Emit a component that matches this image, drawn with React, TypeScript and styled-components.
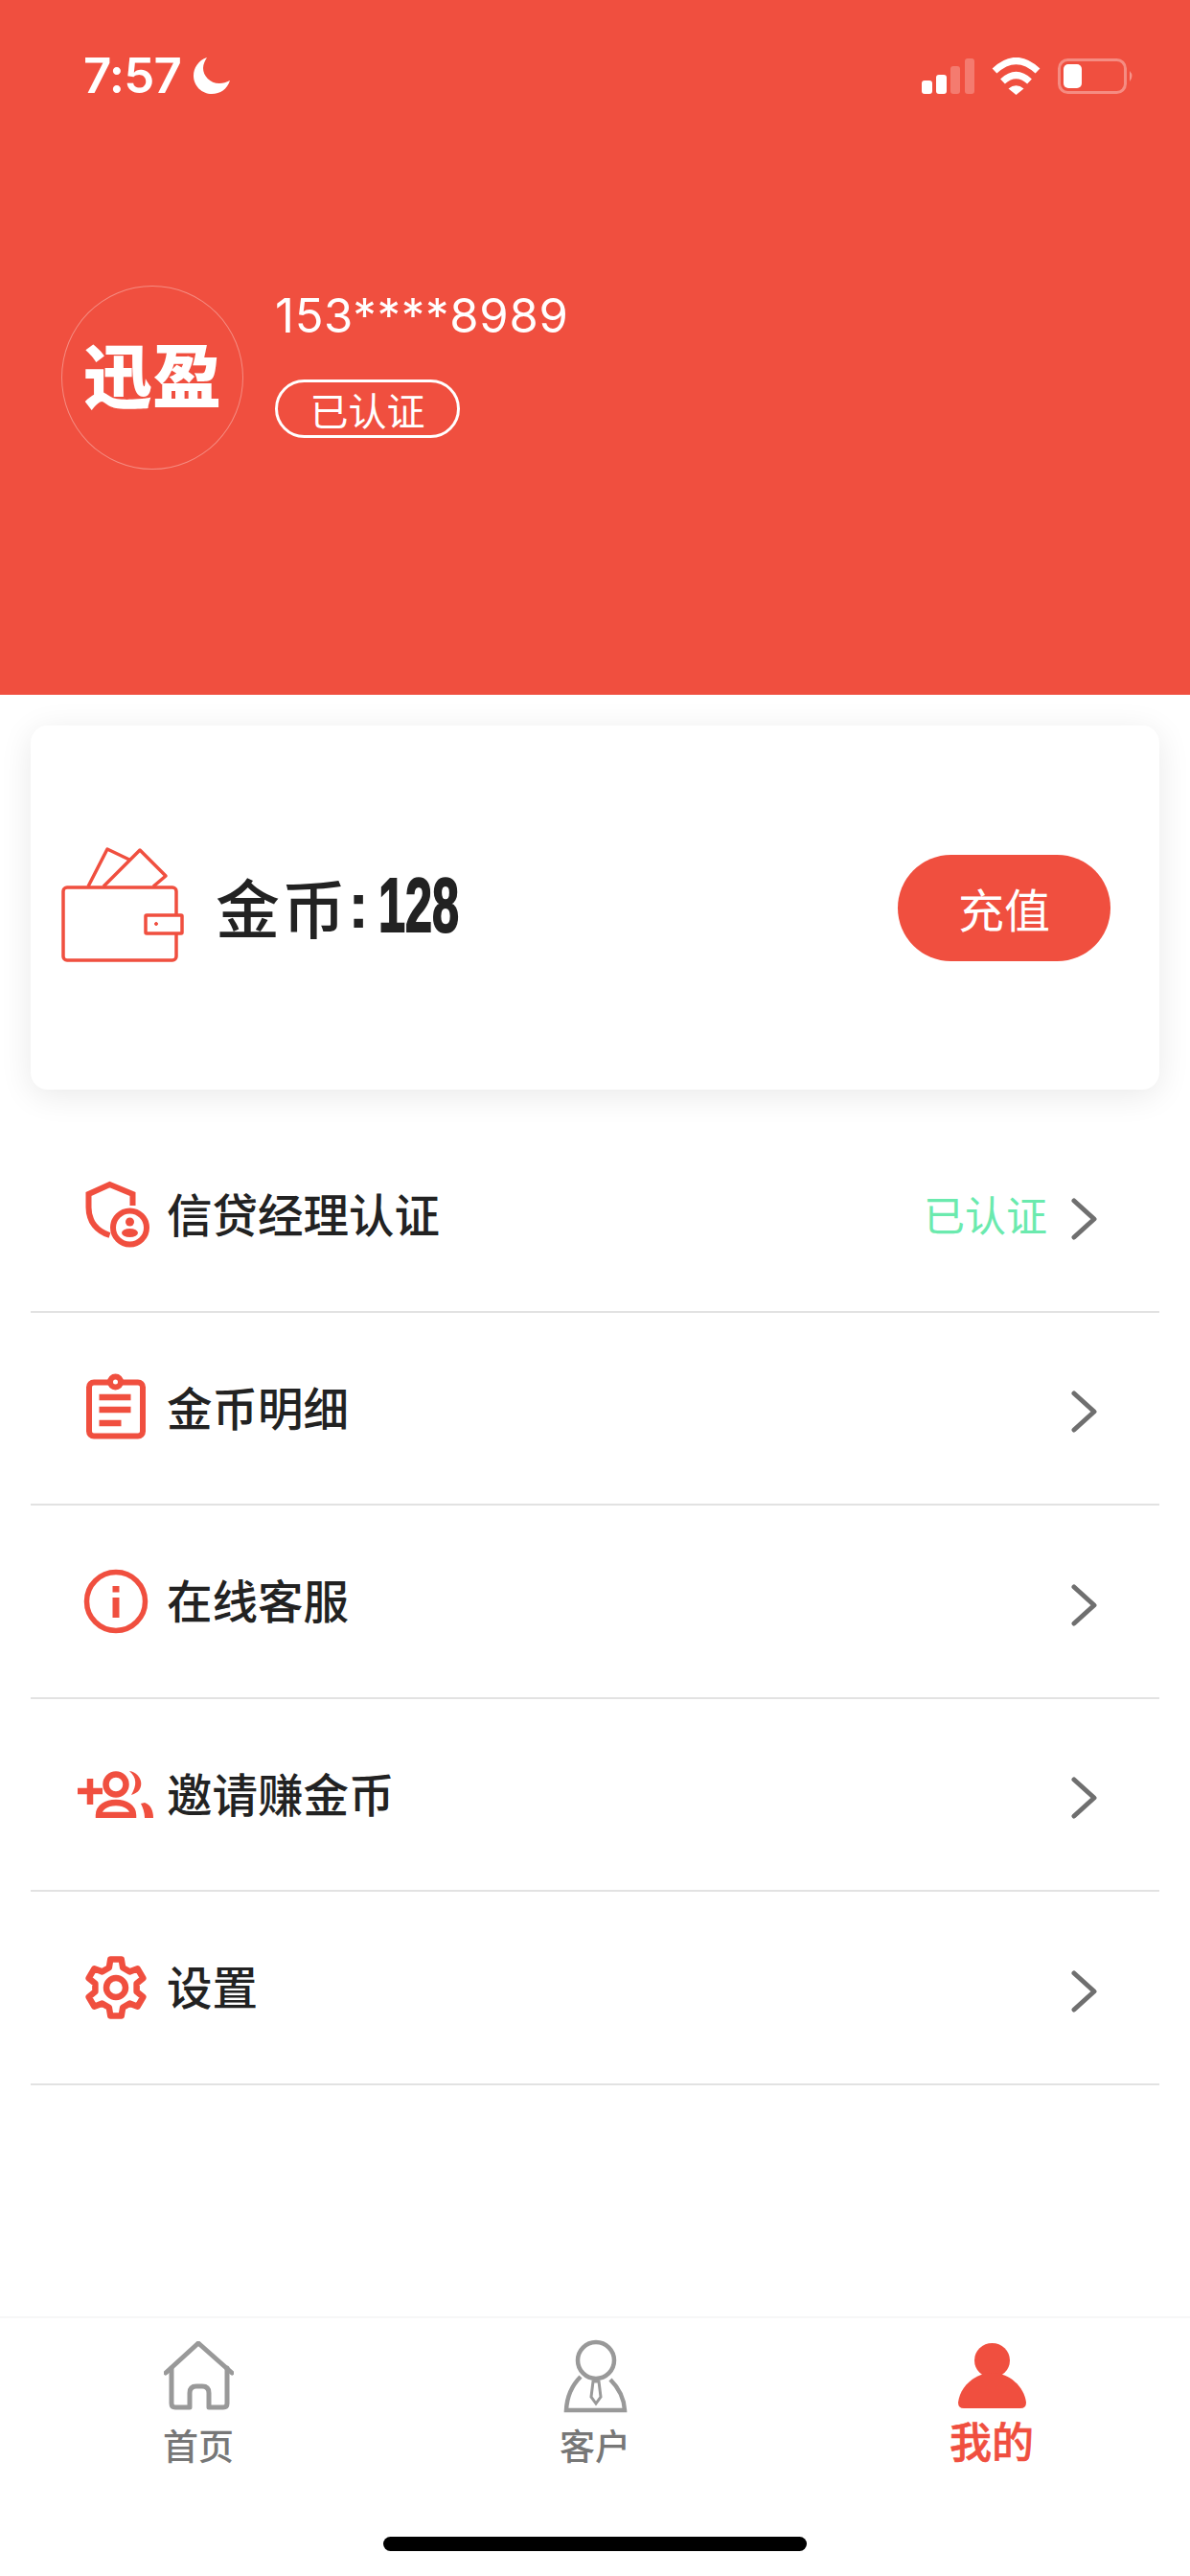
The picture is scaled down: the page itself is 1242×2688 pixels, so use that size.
import React from 'react';
import styled, { createGlobalStyle } from 'styled-components';

const RED = '#f04f3f';
const CJK = '"Noto Sans CJK SC", "Noto Sans", sans-serif';

const GlobalStyle = createGlobalStyle`
  html, body {
    margin: 0;
    padding: 0;
    background: #fff;
    font-family: ${CJK};
  }
`;

const Page = styled.div`
  width: 1242px;
  height: 2688px;
  display: flex;
  flex-direction: column;
  background: #fff;
  overflow: hidden;
`;

const Header = styled.header`
  height: 725px;
  flex-shrink: 0;
  background: ${RED};
  color: #fff;
  display: flex;
  flex-direction: column;
`;

const StatusBar = styled.div`
  display: flex;
  justify-content: space-between;
  align-items: center;
  height: 40px;
  padding: 59px 58px 0 87px;
`;

const StatusLeft = styled.div`
  display: flex;
  align-items: center;
  gap: 13px;
`;

const Time = styled.span`
  font-family: Inter, sans-serif;
  font-size: 51px;
  font-weight: 600;
  line-height: 40px;
  letter-spacing: -0.8px;
`;

const StatusRight = styled.div`
  display: flex;
  align-items: center;
  gap: 18px;
`;

const Profile = styled.div`
  display: flex;
  gap: 33px;
  padding: 199px 0 0 64px;
`;

const Avatar = styled.div`
  width: 190px;
  height: 192px;
  box-sizing: border-box;
  border: 1.5px solid rgba(255, 255, 255, 0.35);
  border-radius: 50%;
  display: flex;
  align-items: center;
  justify-content: center;
  font-size: 72px;
  font-weight: 900;
  line-height: 1;
  padding-bottom: 12px;
`;

const ProfileInfo = styled.div`
  display: flex;
  flex-direction: column;
  align-items: flex-start;
  padding-top: 4px;
`;

const Phone = styled.div`
  font-family: Inter, sans-serif;
  font-size: 49px;
  line-height: 56px;
  letter-spacing: 0.7px;
`;

const Badge = styled.div`
  width: 193px;
  height: 61px;
  box-sizing: border-box;
  margin-top: 38px;
  border: 3px solid #fff;
  border-radius: 31px;
  display: flex;
  align-items: center;
  justify-content: center;
  font-size: 40px;
  line-height: 1;
`;

const CoinCard = styled.section`
  height: 380px;
  flex-shrink: 0;
  margin: 32px 32px 0;
  padding: 0 51px 0 30px;
  background: #fff;
  border-radius: 18px;
  box-shadow: 0 6px 34px rgba(0, 0, 0, 0.09);
  display: flex;
  align-items: center;
  justify-content: space-between;
`;

const CoinInfo = styled.div`
  display: flex;
  align-items: center;
  gap: 31px;
`;

const WalletSvg = styled.svg`
  margin-bottom: 4px;
`;

const CoinText = styled.div`
  display: flex;
  align-items: center;
  font-size: 67px;
  font-weight: 500;
  line-height: 80px;
  color: #222;
  letter-spacing: 2px;
  padding-bottom: 5px;
`;

const Colon = styled.span`
  font-family: "Liberation Sans", sans-serif;
  font-weight: 700;
  margin: 0 8px 0 0;
`;

const CoinCount = styled.span`
  display: inline-block;
  font-family: "Liberation Sans", sans-serif;
  font-size: 80px;
  font-weight: 700;
  letter-spacing: 0;
  width: 84px;
  white-space: nowrap;
  transform: scaleX(0.63);
  transform-origin: left center;
  -webkit-text-stroke: 2px #222;
`;

const RechargeButton = styled.button`
  width: 222px;
  height: 111px;
  border: none;
  border-radius: 56px;
  background: ${RED};
  color: #fff;
  font-family: ${CJK};
  font-size: 48px;
  padding: 0;
`;

const Menu = styled.nav`
  margin: 31px 32px 0;
  display: flex;
  flex-direction: column;
`;

const Row = styled.div`
  height: 201.5px;
  box-sizing: border-box;
  border-bottom: 2px solid #e2e2e2;
  display: flex;
  align-items: center;
  padding: 0 65px 0 49px;
`;

const RowIcon = styled.div`
  width: 80px;
  height: 72px;
  margin-right: 13px;
  display: flex;
  align-items: center;
  justify-content: center;
`;

const RowLabel = styled.span`
  flex: 1;
  font-size: 47.5px;
  font-weight: 500;
  line-height: 60px;
  color: #222;
  padding-bottom: 3px;
`;

const RowStatus = styled.span`
  font-size: 43px;
  color: #6beaae;
  margin-right: 25px;
  padding-bottom: 3px;
`;

const Chevron = styled.svg`
  margin-top: 8px;
`;

const TabBar = styled.footer`
  margin-top: auto;
  height: 271px;
  flex-shrink: 0;
  box-sizing: border-box;
  border-top: 2px solid #f7f7f7;
  display: flex;
  flex-direction: column;
  align-items: center;
`;

const Tabs = styled.div`
  width: 100%;
  height: 228px;
  display: grid;
  grid-template-columns: repeat(3, 1fr);
`;

const Tab = styled.div`
  display: flex;
  flex-direction: column;
  align-items: center;
  padding-top: 22px;
`;

const TabIcon = styled.div`
  height: 76px;
  display: flex;
  align-items: center;
  justify-content: center;
`;

const TabLabel = styled.span<{ $active?: boolean }>`
  margin-top: ${(p) => (p.$active ? '7px' : '14px')};
  font-size: ${(p) => (p.$active ? '44px' : '37px')};
  font-weight: 500;
  line-height: ${(p) => (p.$active ? '44px' : '40px')};
  color: ${(p) => (p.$active ? RED : '#777')};
  -webkit-text-stroke: ${(p) => (p.$active ? '0.6px' : '0')} ${RED};
`;

const HomeIndicator = styled.div`
  width: 442px;
  height: 15px;
  border-radius: 8px;
  background: #000;
`;

const MoonIcon = () => (
  <svg width="38" height="38" viewBox="0 0 38 38">
    <path
      fill="#fff"
      d="M14 0C5 3 0 11 0 19c0 11 9 19 19 19 9 0 16-5 19-14-4 2-7 3-11 3-10 0-17-8-17-16 0-4 2-8 4-11z"
    />
  </svg>
);

const SignalIcon = () => (
  <svg width="55" height="37" viewBox="0 0 55 37" fill="#fff">
    <rect x="0" y="23" width="11" height="14" rx="3" />
    <rect x="15" y="17" width="11" height="20" rx="3" />
    <rect x="30" y="8" width="10" height="29" rx="3" opacity="0.25" />
    <rect x="45" y="0" width="10" height="37" rx="3" opacity="0.25" />
  </svg>
);

const WifiIcon = () => (
  <svg width="51" height="39" viewBox="0 0 51 39" fill="none" stroke="#fff" strokeWidth="7">
    <path d="M3 14Q25.5-7 48 14" />
    <path d="M11.500 25Q25.500 12 39.500 25" />
    <path fill="#fff" stroke="none" d="M17.500 32.500Q25.500 26 33.500 32.500L25.500 39z" />
  </svg>
);

const BatteryIcon = () => (
  <svg width="80" height="37" viewBox="0 0 80 37" fill="none">
    <rect x="1.500" y="1.500" width="69" height="34" rx="9" stroke="#fff" strokeOpacity="0.35" strokeWidth="3" />
    <rect x="6" y="6" width="19" height="25" rx="5" fill="#fff" />
    <path d="M75 13q5 5 0 11z" fill="#fff" fillOpacity="0.4" />
  </svg>
);

const WalletIcon = () => (
  <WalletSvg width="132" height="122" viewBox="0 0 132 122" fill="none" stroke={RED} strokeWidth="3.500" strokeLinejoin="round">
    <rect x="4" y="42" width="118" height="76" rx="4" />
    <rect x="90" y="71" width="38" height="19" rx="1" fill="#fff" />
    <circle cx="101" cy="80" r="1.500" fill={RED} strokeWidth="1" />
    <path d="M30 41 50 2 73 13" />
    <path d="M46 41 84 3l27 27-13 11" />
  </WalletSvg>
);

const ShieldIcon = () => (
  <svg width="72" height="72" viewBox="-1.500 0 72 72" fill="none" stroke={RED} strokeWidth="6">
    <path d="M52 26V14L28 4 6 14v14c0 15 9 25 22 29" />
    <circle cx="49" cy="49" r="17.500" />
    <circle cx="49" cy="43" r="4.500" fill={RED} stroke="none" />
    <ellipse cx="49" cy="54.500" rx="8.500" ry="4.500" fill={RED} stroke="none" />
  </svg>
);

const ClipboardIcon = () => (
  <svg width="72" height="72" viewBox="-2.500 0 72 72" fill="none" stroke={RED} strokeWidth="6">
    <rect x="5.500" y="9.500" width="56" height="56" rx="5" />
    <circle cx="33" cy="9" r="5.500" fill="#fff" />
    <path strokeWidth="6.500" d="M16 25h33M16 38h33M16 52h23" />
  </svg>
);

const InfoIcon = () => (
  <svg width="72" height="72" viewBox="0 0 72 72" fill="none" stroke={RED} strokeWidth="5.500">
    <circle cx="36" cy="36" r="30.500" />
    <path strokeWidth="7" d="M36 20v6.500M36 32v21" />
  </svg>
);

const InviteIcon = () => (
  <svg width="80" height="50" viewBox="0 0 80 50" fill="none" stroke={RED} strokeWidth="6.500">
    <path d="M0 22h26M13 9v27" />
    <circle cx="40" cy="15" r="10.500" />
    <path fill={RED} stroke="none" d="M54 1c14 2 18 21 2 25 6-10 6-18-2-25z" />
    <path d="M22 47c0-8 8-13 18-13s18 5 18 13z" />
    <path fill={RED} stroke="none" d="M70 34c6 2 9 8 9 16H70c0-6-2-11-4-15z" />
  </svg>
);

// gear outline, six teeth with one pointing straight up
const gearPath = () => {
  const pt = (deg: number, r: number) => {
    const a = (deg * Math.PI) / 180;
    return `${(36 + r * Math.cos(a)).toFixed(2)} ${(36 + r * Math.sin(a)).toFixed(2)}`;
  };
  const parts: string[] = [];
  for (let i = 0; i < 6; i++) {
    const c = -90 + i * 60;
    parts.push(pt(c - 19, 22), pt(c - 11, 30), pt(c + 11, 30), pt(c + 19, 22));
  }
  return `M${parts.join('L')}Z`;
};

const GearIcon = () => (
  <svg width="72" height="72" viewBox="0 0 72 72" fill="none" stroke={RED} strokeWidth="6.500" strokeLinejoin="round">
    <path d={gearPath()} />
    <circle cx="36" cy="36" r="10" />
  </svg>
);

const HomeIcon = () => (
  <svg width="73" height="72" viewBox="0 0 73 72" fill="none" stroke="#999" strokeWidth="5" strokeLinecap="round" strokeLinejoin="round">
    <path d="M2 33 36 2l35 31" />
    <path d="M8 28v37q0 4 4 4h15V54q0-7 7-7h6q7 0 7 7v15h15q4 0 4-4V28" />
  </svg>
);

const CustomerIcon = () => (
  <svg width="75" height="80" viewBox="0 0 75 80" fill="none" stroke="#999" strokeWidth="4.500">
    <circle cx="38" cy="24" r="19" />
    <path d="M22 41Q8 55 7 76h61q-1-18-15-32" />
    <path strokeWidth="3" d="M35 46h6l2 16-5 7-5-7z" />
  </svg>
);

const MeIcon = () => (
  <svg width="71" height="68" viewBox="0 0 71 68" fill={RED}>
    <ellipse cx="35.500" cy="18" rx="18.500" ry="18" />
    <path d="M0 62c2-17 18-31 35.500-31S69 45 71 62q0 6-6 6H6q-6 0-6-6z" />
  </svg>
);

const menuItems = [
  { label: '信贷经理认证', icon: <ShieldIcon />, status: '已认证' },
  { label: '金币明细', icon: <ClipboardIcon /> },
  { label: '在线客服', icon: <InfoIcon /> },
  { label: '邀请赚金币', icon: <InviteIcon /> },
  { label: '设置', icon: <GearIcon /> },
];

const tabs = [
  { label: '首页', icon: <HomeIcon /> },
  { label: '客户', icon: <CustomerIcon /> },
  { label: '我的', icon: <MeIcon />, active: true },
];

const App = () => {
  return (
    <Page>
      <GlobalStyle />
      <Header>
        <StatusBar>
          <StatusLeft>
            <Time>7:57</Time>
            <MoonIcon />
          </StatusLeft>
          <StatusRight>
            <SignalIcon />
            <WifiIcon />
            <BatteryIcon />
          </StatusRight>
        </StatusBar>
        <Profile>
          <Avatar>迅盈</Avatar>
          <ProfileInfo>
            <Phone>153****8989</Phone>
            <Badge>已认证</Badge>
          </ProfileInfo>
        </Profile>
      </Header>

      <CoinCard>
        <CoinInfo>
          <WalletIcon />
          <CoinText>
            金币<Colon>:</Colon>
            <CoinCount>128</CoinCount>
          </CoinText>
        </CoinInfo>
        <RechargeButton type="button">充值</RechargeButton>
      </CoinCard>

      <Menu>
        {menuItems.map((item) => (
          <Row key={item.label}>
            <RowIcon>{item.icon}</RowIcon>
            <RowLabel>{item.label}</RowLabel>
            {item.status && <RowStatus>{item.status}</RowStatus>}
            <Chevron width="27" height="44" viewBox="0 0 27 44" fill="none" stroke="#6f6f6f" strokeWidth="5" strokeLinecap="round" strokeLinejoin="round">
              <path d="M3 3l21 19L3 41" />
            </Chevron>
          </Row>
        ))}
      </Menu>

      <TabBar>
        <Tabs>
          {tabs.map((tab) => (
            <Tab key={tab.label}>
              <TabIcon>{tab.icon}</TabIcon>
              <TabLabel $active={tab.active}>{tab.label}</TabLabel>
            </Tab>
          ))}
        </Tabs>
        <HomeIndicator />
      </TabBar>
    </Page>
  );
};

export default App;
